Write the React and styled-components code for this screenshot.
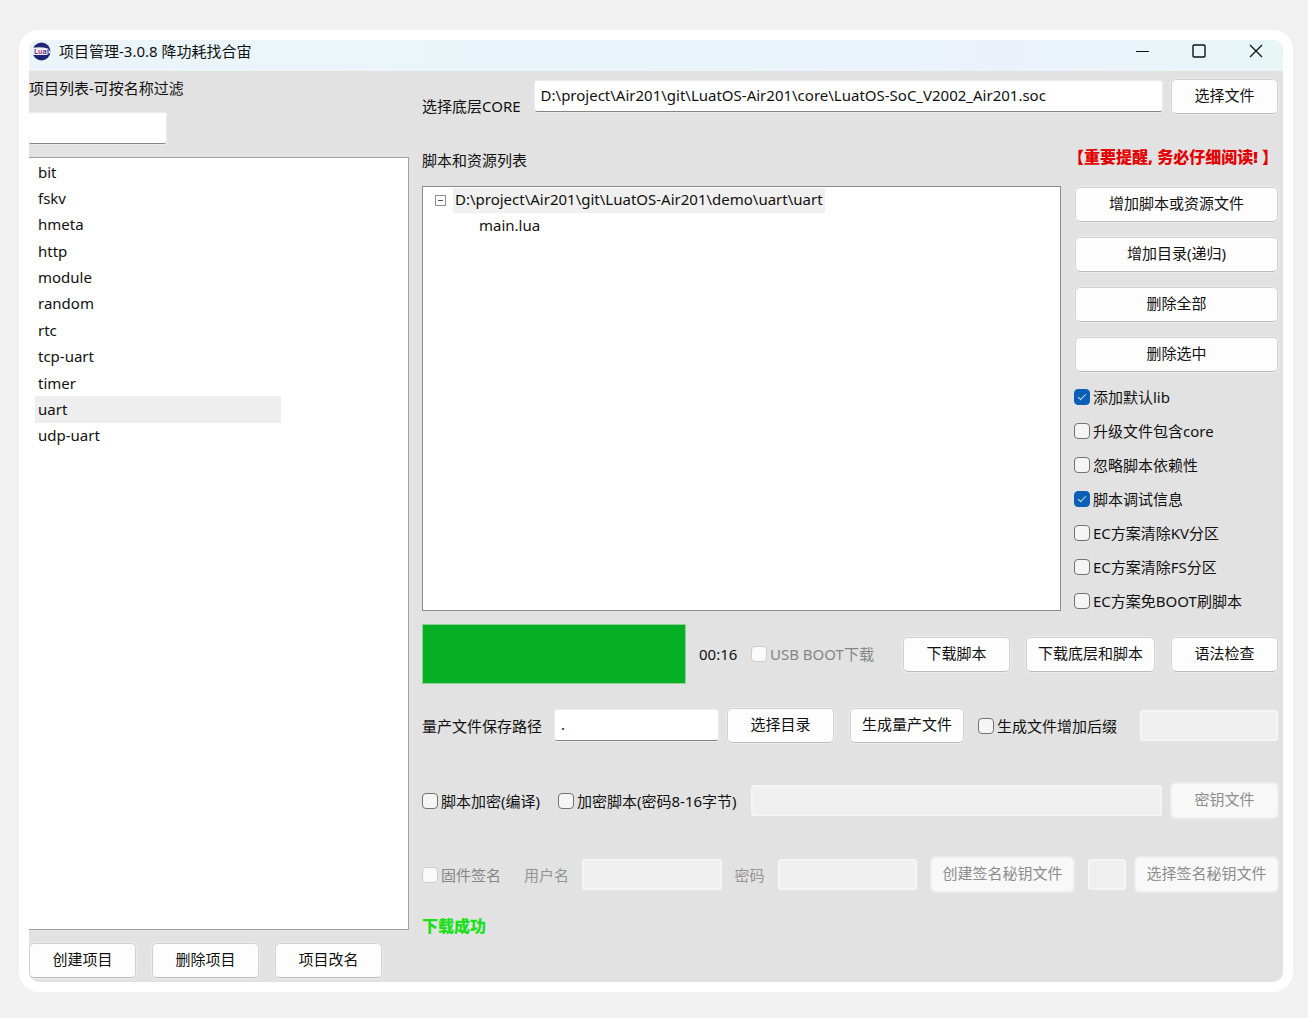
import React, { useState } from "react";
import styled, { createGlobalStyle, css } from "styled-components";

const GlobalStyle = createGlobalStyle`
  *, *::before, *::after { box-sizing: border-box; }
  body {
    margin: 0;
    background: #f1f1f1;
    color: #111;
    font: 15px/20px "Noto Sans", "Noto Sans CJK SC", sans-serif;
  }
  button, input { font: inherit; color: inherit; margin: 0; }
`;

const Page = styled.div`
  padding: 30px 15px 26px 19px;
`;

const Frame = styled.div`
  padding: 10px;
  background: #fff;
  border-radius: 20px;
`;

const Window = styled.main`
  overflow: hidden;
  border-radius: 10px;
  background: #e2e2e2;
`;

const TitleBar = styled.header`
  display: flex;
  align-items: center;
  height: 31px;
  padding: 0 13px 9px 3px;
  background: linear-gradient(90deg, #ebf5f9, #eaf5fb 50%, #eaf1fb 78%, #e8f6f6);
`;

const Title = styled.h1`
  flex: 1;
  margin: 0 0 0 8px;
  font-size: 15px;
  line-height: 20px;
  font-weight: 400;
`;

const WindowControls = styled.div`
  display: flex;
  gap: 29px;
`;

const ControlButton = styled.button`
  display: grid;
  place-items: center;
  width: 28px;
  height: 20px;
  padding: 0;
  border: 0;
  background: none;
`;

const Body = styled.div`
  display: flex;
  gap: 13px;
`;

const Sidebar = styled.section`
  flex: 0 0 380px;
  display: flex;
  flex-direction: column;
  padding: 7px 0 4px;
`;

const Label = styled.label`
  color: ${(p) => (p.$muted ? "#949494" : "#111")};
  line-height: ${(p) => p.$line || 20}px;
  white-space: nowrap;
  ${(p) => p.$low && "align-self: flex-end;"}
`;

const TextInput = styled.input`
  ${(p) => (p.$width ? css`flex: 0 0 ${p.$width}px; width: ${p.$width}px;` : css`flex: 1; width: 0;`)}
  height: 31px;
  padding: 0 6px 2px;
  border: 0;
  border-bottom: 1px solid #868686;
  border-radius: 2px;
  background: #fff;
  box-shadow: 0 0 0 1px #ececec;
  outline: none;

  &:disabled {
    border: 2px solid #f5f5f5;
    border-radius: 3px;
    background: #efefef;
    box-shadow: none;
  }
`;

const FilterInput = styled(TextInput)`
  flex: none;
  margin: 15px 0 13px;
`;

const ProjectList = styled.div`
  flex: 1;
  min-height: 773px;
  padding: 1px 0 0 6px;
  border: 1px solid #a0a0a0;
  border-left: 0;
  background: #fff;
`;

const ProjectRows = styled.ul`
  display: grid;
  grid-auto-rows: 1fr;
  width: 246px;
  height: 290px;
  margin: 0;
  padding: 0;
  list-style: none;
`;

const ProjectButton = styled.button`
  display: block;
  width: 100%;
  height: 100%;
  padding: 0 3px 1px;
  border: 0;
  text-align: left;
  background: ${(p) => (p.$selected ? "#eeeeee" : "none")};
`;

const Actions = styled.div`
  display: flex;
  gap: 16px;
  margin-top: 13px;
`;

const Button = styled.button`
  flex: none;
  width: ${(p) => (p.$width ? `${p.$width}px` : "100%")};
  height: 35px;
  padding: 0 0 3px;
  border: 1px solid #d0d0d0;
  border-bottom-color: #bbb;
  border-radius: 5px;
  background: #fdfdfd;
  box-shadow: 0 0 0 1px #ececec;
  white-space: nowrap;

  &:disabled {
    border-color: #f0f0f0;
    background: #f8f8f8;
    color: #8c8c8c;
  }
`;

const Workspace = styled.section`
  flex: 1;
  min-width: 0;
  padding: 8px 5px 46px 0;
`;

const Row = styled.div`
  display: flex;
  align-items: ${(p) => p.$align || "center"};
  gap: ${(p) => p.$gap || 0}px;
  min-height: ${(p) => p.$height || 35}px;
  margin-top: ${(p) => p.$top || 0}px;
`;

const Group = styled.div`
  display: flex;
  align-items: center;
  gap: ${(p) => p.$gap || 0}px;
  ${(p) => p.$grow && "flex: 1; min-width: 0;"}
`;

const Notice = styled.strong`
  margin-left: auto;
  color: #e30000;
  font-size: 16px;
  line-height: 18px;
  font-weight: 900;
  text-spacing-trim: space-all;
  white-space: nowrap;
`;

const Tree = styled.div`
  flex: 1;
  min-width: 0;
  min-height: 425px;
  padding: 1px 12px;
  border: 1px solid #8c8c8c;
  background: #fff;
`;

const TreeRow = styled.div`
  display: flex;
  align-items: center;
  height: 25px;
`;

const TreeToggle = styled.button`
  display: grid;
  width: 11px;
  height: 11px;
  padding: 0;
  border: 0;
  background: none;
`;

const TreeRoot = styled.span`
  margin-left: 7px;
  padding: 0 2px 2px;
  line-height: 23px;
  background: #f0f0f0;
  white-space: nowrap;
`;

const TreeLeaf = styled.span`
  padding: 0 0 2px 44px;
`;

const SidePanel = styled.div`
  flex: 0 0 203px;
  display: flex;
  flex-direction: column;
  padding-top: 1px;
`;

const ButtonStack = styled.div`
  display: grid;
  gap: 15px;
`;

const CheckStack = styled.div`
  display: grid;
  grid-auto-rows: 20px;
  gap: 14px;
  margin: 15px 0 0 -1px;
`;

const CheckLabel = styled.label`
  display: flex;
  align-items: center;
  gap: 3px;
  color: ${(p) => (p.$muted ? "#868686" : "#111")};
  white-space: nowrap;
`;

const CheckBox = styled.input.attrs({ type: "checkbox" })`
  appearance: none;
  display: grid;
  place-items: center;
  flex: none;
  width: 16px;
  height: 16px;
  border: 1px solid #727272;
  border-radius: 4px;
  background: #f5f5f5;

  &:checked {
    border-color: #0a60b5;
    background: #0a60b5;
  }
  &:checked::after {
    content: "";
    width: 8px;
    height: 4px;
    margin-bottom: 2px;
    border: solid #cfe4f7;
    border-width: 0 0 1px 1px;
    transform: rotate(-45deg);
  }
  &:disabled {
    border-color: #cccccc;
    background: #fafafa;
  }
`;

const Progress = styled.div`
  width: 264px;
  height: 60px;
  border: 1px solid #8fcf98;
  background: #bcbcbc;
`;

const ProgressFill = styled.div`
  height: 100%;
  background: #06b025;
`;

const Elapsed = styled.time`
  width: 52px;
`;

const Success = styled.output`
  display: block;
  margin-top: 24px;
  color: #1be01b;
  font-size: 16px;
  line-height: 20px;
  font-weight: 900;
`;

function Check({ children, defaultChecked = false, disabled = false }) {
  return (
    <CheckLabel $muted={disabled}>
      <CheckBox defaultChecked={defaultChecked} disabled={disabled} />
      {children}
    </CheckLabel>
  );
}

function Logo() {
  return (
    <svg width="19" height="19" viewBox="0 0 19 19" aria-hidden="true">
      <circle cx="9.500" cy="9.500" r="9" fill="#1f2478" />
      <path d="M0 6q8 -1.500 16 .5l3 3.500q-2 3 -5 3H0z" fill="#efeef8" />
      <text x="2" y="12" fontSize="7" fontWeight="700" fill="#4a4aa0">
        L<tspan fill="#c4405e">u</tspan>at
      </text>
    </svg>
  );
}

const projects = [
  "bit", "fskv", "hmeta", "http", "module", "random",
  "rtc", "tcp-uart", "timer", "uart", "udp-uart",
];

const options = [
  ["添加默认lib", true],
  ["升级文件包含core", false],
  ["忽略脚本依赖性", false],
  ["脚本调试信息", true],
  ["EC方案清除KV分区", false],
  ["EC方案清除FS分区", false],
  ["EC方案免BOOT刷脚本", false],
];

export default function App() {
  const [selected, setSelected] = useState("uart");
  const progress = 100;

  return (
    <Page>
      <GlobalStyle />
      <Frame>
        <Window>
          <TitleBar>
            <Logo />
            <Title>项目管理-3.0.8 降功耗找合宙</Title>
            <WindowControls>
              <ControlButton aria-label="最小化">
                <svg width="14" height="14" stroke="#111" fill="none"><path d="M1 7.500h13" /></svg>
              </ControlButton>
              <ControlButton aria-label="最大化">
                <svg width="14" height="14" stroke="#111" strokeWidth="1.400" fill="none"><rect x="1" y="1" width="12" height="12" rx="1" /></svg>
              </ControlButton>
              <ControlButton aria-label="关闭">
                <svg width="14" height="14" stroke="#111" strokeWidth="1.300" fill="none"><path d="M1 1l12 12M13 1L1 13" /></svg>
              </ControlButton>
            </WindowControls>
          </TitleBar>

          <Body>
            <Sidebar>
              <Label htmlFor="filter">项目列表-可按名称过滤</Label>
              <FilterInput id="filter" $width={137} />
              <ProjectList>
                <ProjectRows>
                  {projects.map((name) => (
                    <li key={name}>
                      <ProjectButton
                        $selected={name === selected}
                        aria-pressed={name === selected}
                        onClick={() => setSelected(name)}
                      >
                        {name}
                      </ProjectButton>
                    </li>
                  ))}
                </ProjectRows>
              </ProjectList>
              <Actions>
                <Button $width={107}>创建项目</Button>
                <Button $width={107}>删除项目</Button>
                <Button $width={107}>项目改名</Button>
              </Actions>
            </Sidebar>

            <Workspace>
              <Row $gap={14} $align="stretch">
                <Label htmlFor="core" $line={16} $low>选择底层CORE</Label>
                <Group $gap={9} $grow>
                  <TextInput
                    id="core"
                    defaultValue="D:\project\Air201\git\LuatOS-Air201\core\LuatOS-SoC_V2002_Air201.soc"
                  />
                  <Button $width={107}>选择文件</Button>
                </Group>
              </Row>

              <Row $top={34} $height={24} $align="flex-start">
                <Label as="span" $line={24}>脚本和资源列表</Label>
                <Notice>【重要提醒, 务必仔细阅读! 】</Notice>
              </Row>

              <Row $top={14} $gap={14} $align="stretch">
                <Tree>
                  <TreeRow>
                    <TreeToggle aria-label="折叠">
                      <svg width="11" height="11" fill="none" stroke="#8f8f8f">
                        <rect x=".5" y=".5" width="10" height="10" />
                        <path d="M3 5.500h5" stroke="#555" />
                      </svg>
                    </TreeToggle>
                    <TreeRoot>D:\project\Air201\git\LuatOS-Air201\demo\uart\uart</TreeRoot>
                  </TreeRow>
                  <TreeRow>
                    <TreeLeaf>main.lua</TreeLeaf>
                  </TreeRow>
                </Tree>
                <SidePanel>
                  <ButtonStack>
                    <Button>增加脚本或资源文件</Button>
                    <Button>增加目录(递归)</Button>
                    <Button>删除全部</Button>
                    <Button>删除选中</Button>
                  </ButtonStack>
                  <CheckStack>
                    {options.map(([text, on]) => (
                      <Check key={text} defaultChecked={on}>{text}</Check>
                    ))}
                  </CheckStack>
                </SidePanel>
              </Row>

              <Row $top={13} $height={60}>
                <Group $gap={13} $grow>
                  <Progress role="progressbar" aria-label="下载进度" aria-valuenow={progress}>
                    <ProgressFill style={{ width: `${progress}%` }} />
                  </Progress>
                  <Group>
                    <Elapsed>00:16</Elapsed>
                    <Check disabled>USB BOOT下载</Check>
                  </Group>
                </Group>
                <Group $gap={16}>
                  <Button $width={107}>下载脚本</Button>
                  <Button $width={129}>下载底层和脚本</Button>
                  <Button $width={107}>语法检查</Button>
                </Group>
              </Row>

              <Row $top={24} $gap={16}>
                <Group $gap={13} $grow>
                  <Label htmlFor="output">量产文件保存路径</Label>
                  <Group $gap={9} $grow>
                    <TextInput id="output" defaultValue="." />
                    <Button $width={107}>选择目录</Button>
                  </Group>
                </Group>
                <Group $gap={14}>
                  <Button $width={114}>生成量产文件</Button>
                  <Group $gap={23}>
                    <Check>生成文件增加后缀</Check>
                    <TextInput $width={138} disabled aria-label="文件后缀" />
                  </Group>
                </Group>
              </Row>

              <Row $top={40} $gap={14}>
                <Group $gap={18}>
                  <Check>脚本加密(编译)</Check>
                  <Check>加密脚本(密码8-16字节)</Check>
                </Group>
                <Group $gap={9} $grow>
                  <TextInput disabled aria-label="密码" />
                  <Button $width={107} disabled>密钥文件</Button>
                </Group>
              </Row>

              <Row $top={39} $gap={14}>
                <Group $gap={13} $grow>
                  <Group $gap={23}>
                    <Check disabled>固件签名</Check>
                    <Label htmlFor="user" $muted>用户名</Label>
                  </Group>
                  <TextInput id="user" disabled />
                  <Label htmlFor="password" $muted>密码</Label>
                  <TextInput id="password" disabled />
                </Group>
                <Group $gap={14}>
                  <Button $width={143} disabled>创建签名秘钥文件</Button>
                  <Group $gap={9}>
                    <TextInput $width={38} disabled aria-label="签名秘钥文件" />
                    <Button $width={143} disabled>选择签名秘钥文件</Button>
                  </Group>
                </Group>
              </Row>

              <Success>下载成功</Success>
            </Workspace>
          </Body>
        </Window>
      </Frame>
    </Page>
  );
}
